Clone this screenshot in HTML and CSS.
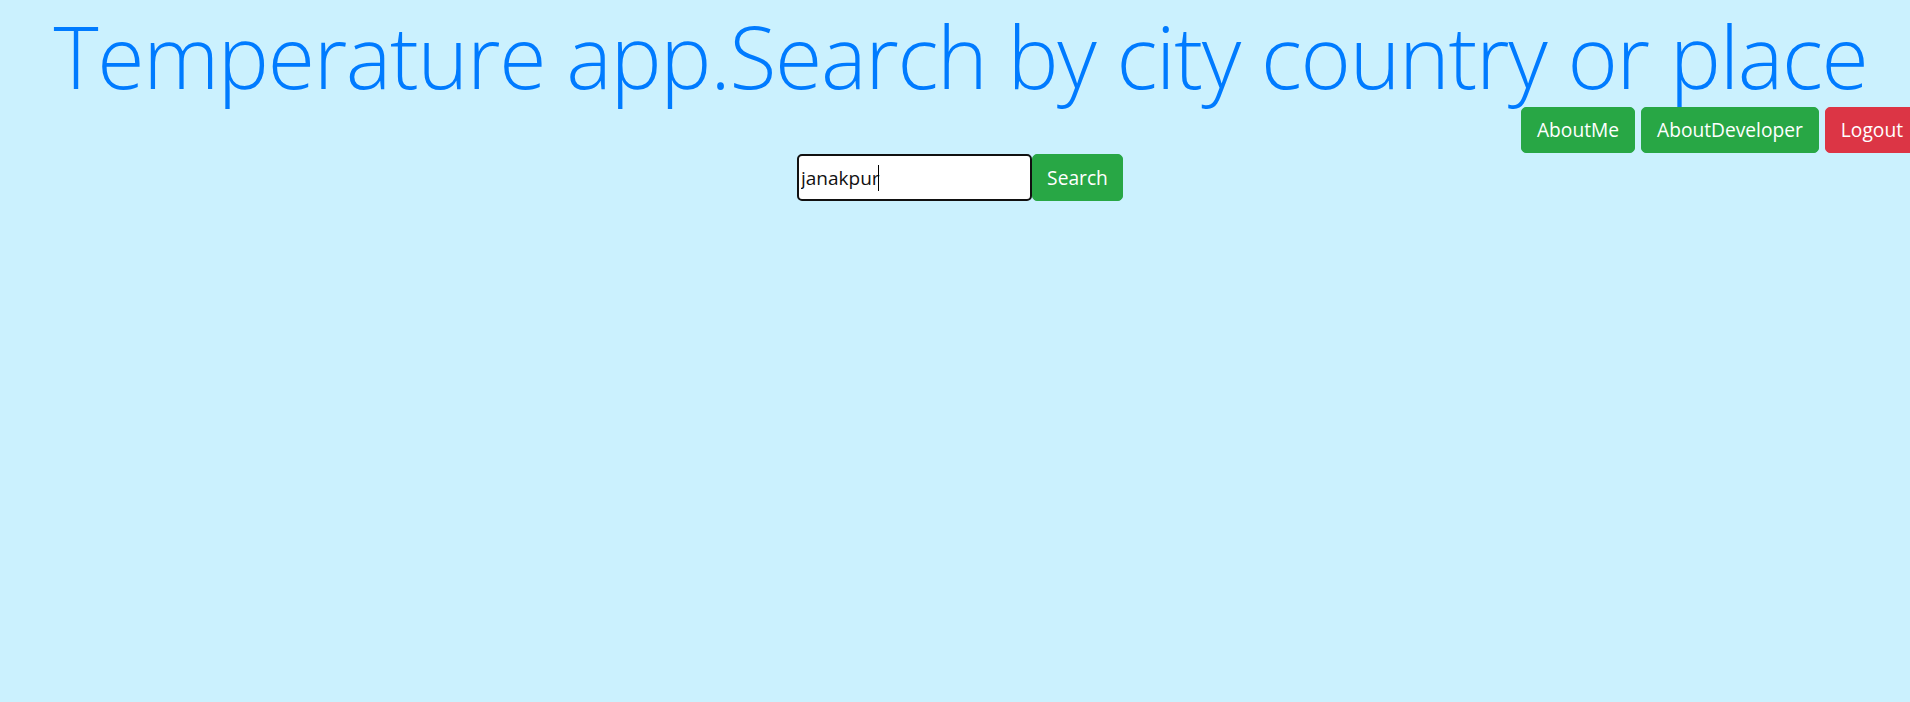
FILE: index.html
```html
<!DOCTYPE html>
<html lang="en">
<head>
<meta charset="utf-8">
<title>Temperature app</title>
<link rel="stylesheet" href="styles.css">
</head>
<body>
<div class="page">
  <h1 class="title">Temperature app.Search by city country or place</h1>
  <div class="nav">
    <button class="btn btn-green">AboutMe</button>
    <button class="btn btn-green">AboutDeveloper</button>
    <button class="btn btn-red">Logout</button>
  </div>
  <div class="search">
    <div class="field">
      <input class="input" type="text" value="janakpur">
      <span class="caret"></span>
    </div>
    <button class="btn btn-green btn-search">Search</button>
  </div>
</div>
</body>
</html>
```
FILE: styles.css
```css
html, body {
  margin: 0;
  padding: 0;
  overflow: hidden;
}
body {
  background: #cbf1fe;
  width: 1910px;
  height: 702px;
  font-family: "Open Sans", "Noto Sans", sans-serif;
}
.page {
  display: flex;
  flex-direction: column;
}
.title {
  margin: 4px 0 0 0;
  padding-left: 11px;
  font-weight: 300;
  font-size: 86px;
  letter-spacing: -1.3px;
  line-height: 1.2;
  color: #007bff;
  text-align: center;
  white-space: nowrap;
}
.nav {
  display: flex;
  justify-content: flex-end;
  gap: 6px;
  margin-right: -9px;
  margin-top: 0;
}
.btn {
  font-family: "Open Sans", "Noto Sans", sans-serif;
  font-size: 19.2px;
  color: #fff;
  border: 1px solid transparent;
  border-radius: 5px;
  height: 46px;
  padding: 0 15px;
  line-height: 44px;
  cursor: pointer;
}
.btn-green {
  background: #28a745;
  border-color: #28a745;
}
.btn-red {
  background: #dc3545;
  border-color: #dc3545;
}
.search {
  display: flex;
  justify-content: center;
  padding-left: 10px;
  margin-top: 1px;
}
.field {
  position: relative;
}
.input {
  box-sizing: border-box;
  width: 235px;
  height: 47px;
  border: 2px solid #111;
  border-radius: 5px;
  padding: 0 2px;
  font-family: "Open Sans", "Noto Sans", sans-serif;
  font-size: 19px;
  color: #111;
  background: #fff;
  outline: none;
}
.caret {
  position: absolute;
  left: 81px;
  top: 11px;
  width: 1px;
  height: 26px;
  background: #000;
}
.btn-search {
  height: 47px;
  width: 91px;
  padding: 0;
}
```
